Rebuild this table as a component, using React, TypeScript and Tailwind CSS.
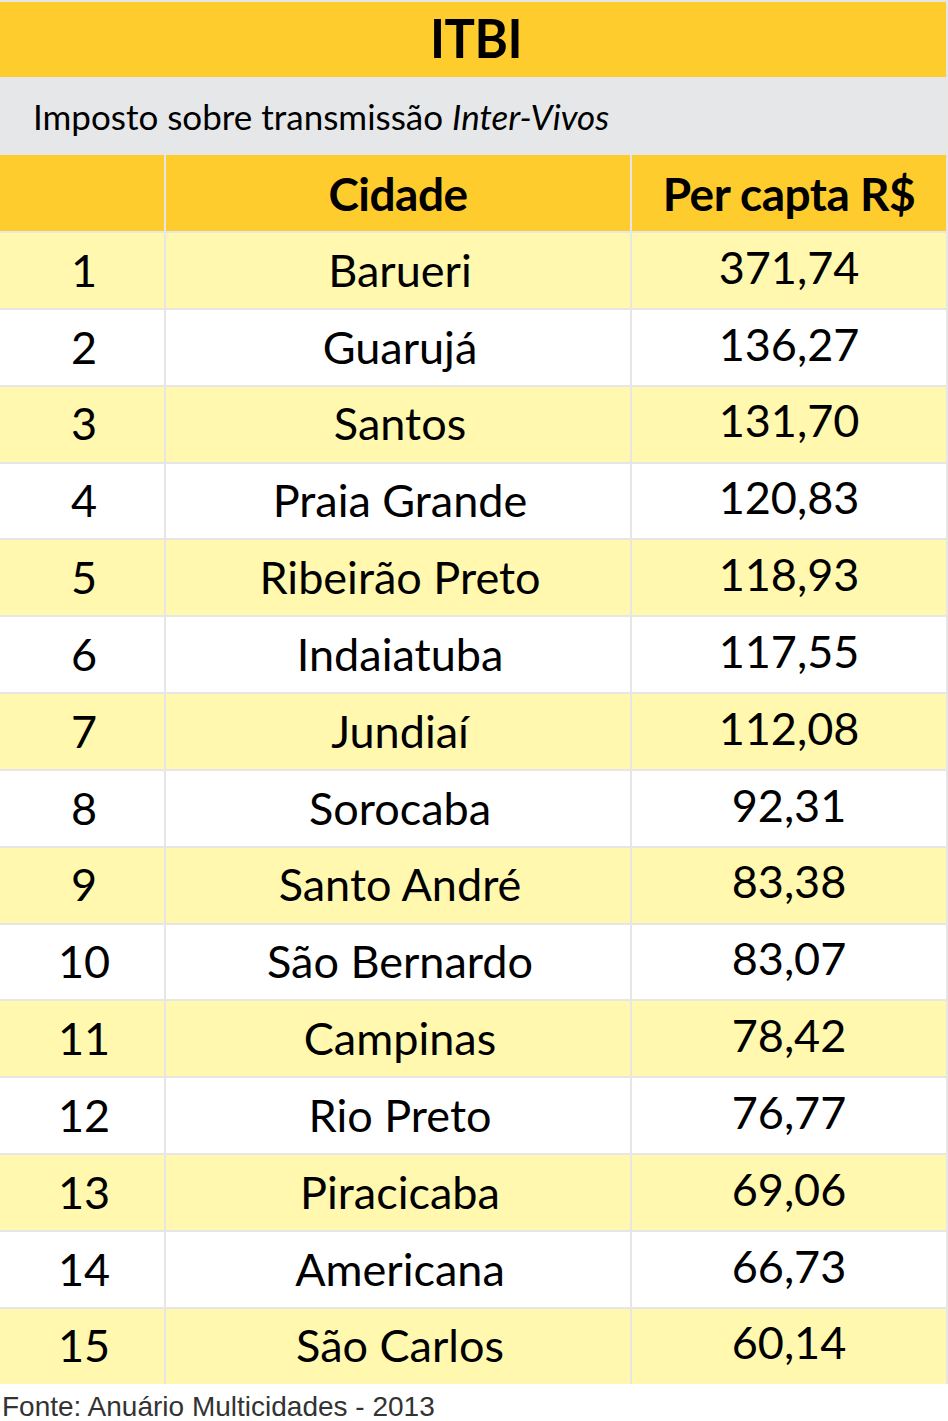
import React from "react";

const rows: [string, string, string][] = [
  ["1", "Barueri", "371,74"],
  ["2", "Guarujá", "136,27"],
  ["3", "Santos", "131,70"],
  ["4", "Praia Grande", "120,83"],
  ["5", "Ribeirão Preto", "118,93"],
  ["6", "Indaiatuba", "117,55"],
  ["7", "Jundiaí", "112,08"],
  ["8", "Sorocaba", "92,31"],
  ["9", "Santo André", "83,38"],
  ["10", "São Bernardo", "83,07"],
  ["11", "Campinas", "78,42"],
  ["12", "Rio Preto", "76,77"],
  ["13", "Piracicaba", "69,06"],
  ["14", "Americana", "66,73"],
  ["15", "São Carlos", "60,14"],
];

export default function App() {
  return (
    <div className="w-[948px] h-[1421px] bg-white overflow-hidden" style={{ fontFamily: "Lato, 'Open Sans', sans-serif" }}>
      <div className="flex flex-col gap-[2px] bg-[#e6e6e6] pt-[2px] pr-[2px]">
        <div className="h-[75px] bg-[#ffcc2e] flex items-center justify-center pb-[3px] pl-[6px]">
          <span className="text-[54px] leading-none font-bold text-black tracking-[-0.5px] scale-x-[0.94] inline-block">ITBI</span>
        </div>
        <div className="h-[74px] bg-[#e6e7e8] flex items-center pl-[33px]">
          <span className="text-[35px] text-black inline-block whitespace-nowrap">
            Imposto sobre transmissão <i>Inter-Vivos</i>
          </span>
        </div>
        <div className="grid grid-cols-[164px_464px_1fr] gap-x-[2px] h-[76px]">
          <div className="bg-[#ffcc2e]" />
          <div className="bg-[#ffcc2e] flex items-center justify-center">
            <span className="text-[46px] font-bold text-black tracking-[-0.5px]">Cidade</span>
          </div>
          <div className="bg-[#ffcc2e] flex items-center justify-center">
            <span className="text-[46px] font-bold text-black tracking-[-0.5px] whitespace-nowrap">Per capta R$</span>
          </div>
        </div>
        {rows.map(([n, city, val], i) => {
          const bg = i % 2 === 0 ? "bg-[#fff8ae]" : "bg-white";
          return (
            <div key={n} className="grid grid-cols-[164px_464px_1fr] gap-x-[2px] h-[74.85px] text-[45px] text-black">
              <div className={`${bg} flex items-center justify-center pl-[4px]`}>{n}</div>
              <div className={`${bg} flex items-center justify-center pl-[4px]`}>{city}</div>
              <div className={`${bg} flex items-center justify-center pb-[6px]`}>{val}</div>
            </div>
          );
        })}
      </div>
      <div className="pl-[2px] pt-[8px] text-[28px] leading-[30px] text-[#333333] whitespace-nowrap" style={{ fontFamily: "'Liberation Sans', Arial, sans-serif" }}>
        Fonte: Anuário Multicidades - 2013
      </div>
    </div>
  );
}
